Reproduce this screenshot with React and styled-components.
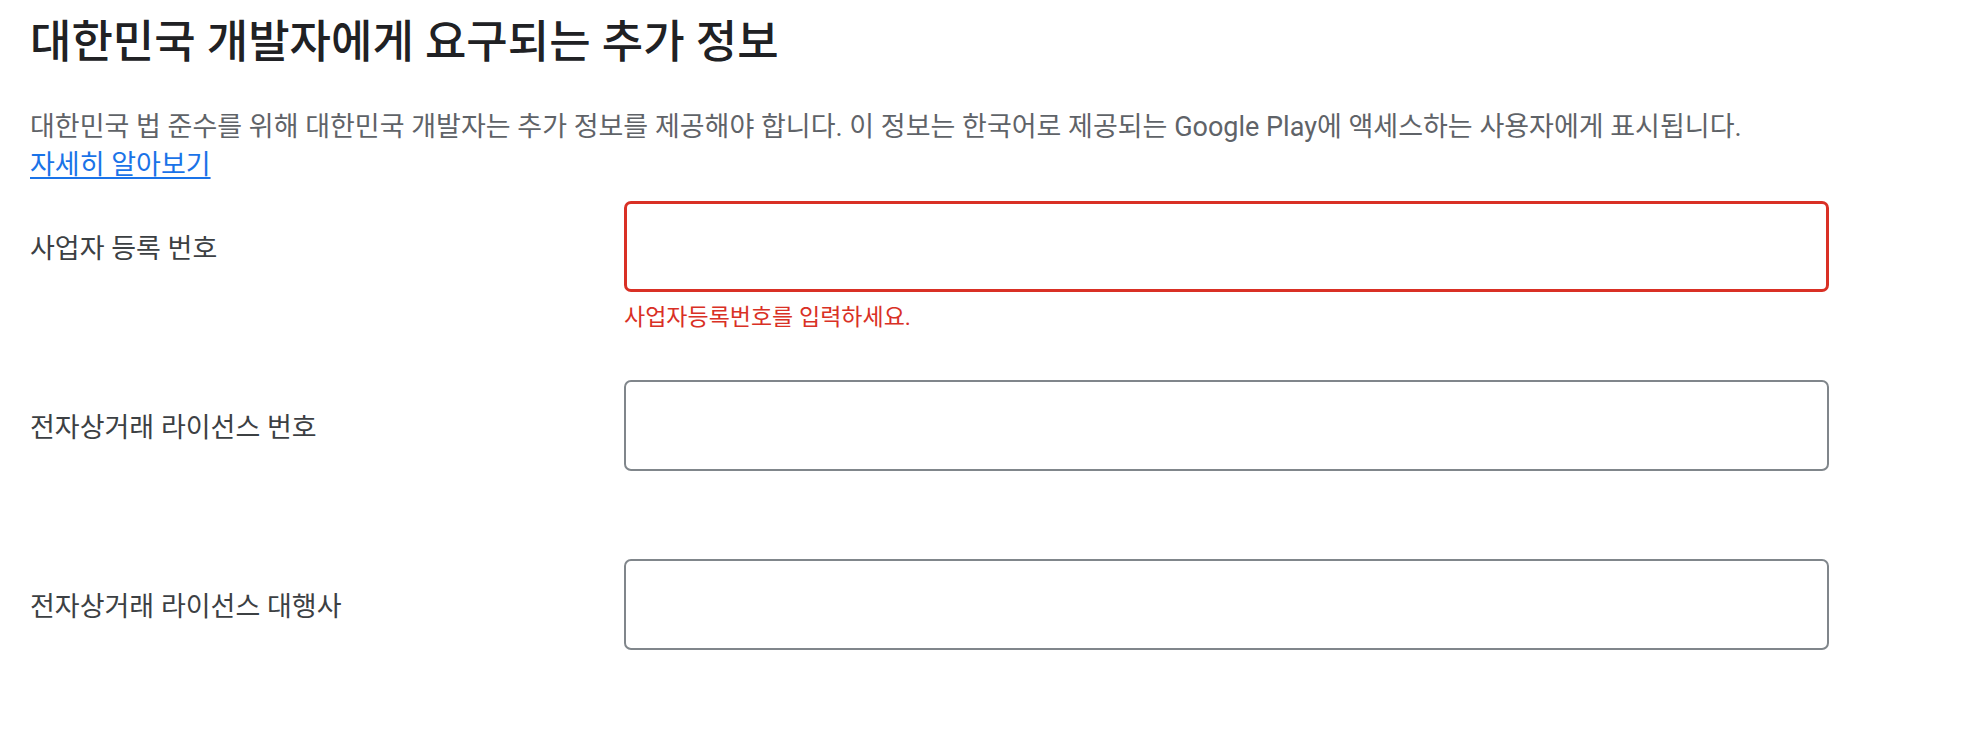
import React from 'react';
import styled, { createGlobalStyle } from 'styled-components';

const GlobalStyle = createGlobalStyle`
	body {
		margin: 0;
		background: #fff;
		font-family: Roboto, "Noto Sans CJK KR", sans-serif;
	}
`;

const Page = styled.div`
	padding: 16px 0 0 30px;
	width: 1799px;
`;

const Title = styled.h1`
	margin: 0;
	font-size: 45px;
	line-height: 54px;
	font-weight: 500;
	color: #202124;
`;

const Intro = styled.p`
	margin: 38px 0 0;
	font-size: 27px;
	line-height: 38px;
	color: #5f6368;
`;

const Link = styled.a`
	display: inline-block;
	color: #1a73e8;
	text-decoration: underline;
	text-underline-offset: 3px;
	cursor: pointer;
`;

const Form = styled.div`
	margin-top: 17px;
	display: flex;
	flex-direction: column;
	gap: 48px;
`;

const Row = styled.div`
	display: flex;
	align-items: flex-start;
`;

const Label = styled.label`
	width: 594px;
	height: 91px;
	display: flex;
	align-items: center;
	font-size: 27px;
	color: #3c4043;
`;

const Field = styled.div`
	width: 1205px;
`;

const Input = styled.input`
	display: block;
	box-sizing: border-box;
	width: 100%;
	height: 91px;
	padding: 0 20px;
	border: ${props => props.$error ? '3px solid #d93025' : '2px solid #80868b'};
	border-radius: 7px;
	background: #fff;
	font-size: 27px;
	font-family: inherit;
	outline: none;
`;

const Helper = styled.div`
	margin-top: 12px;
	min-height: 28px;
	font-size: 23px;
	line-height: 28px;
	color: #d93025;
`;

const fields = [
	{ label: '사업자 등록 번호', error: '사업자등록번호를 입력하세요.' },
	{ label: '전자상거래 라이선스 번호' },
	{ label: '전자상거래 라이선스 대행사' },
];

const App = () => {
	return (
		<Page>
			<GlobalStyle />
			<Title>대한민국 개발자에게 요구되는 추가 정보</Title>
			<Intro>
				대한민국 법 준수를 위해 대한민국 개발자는 추가 정보를 제공해야 합니다. 이 정보는 한국어로 제공되는 Google Play에 액세스하는 사용자에게 표시됩니다.
				<br />
				<Link>자세히 알아보기</Link>
			</Intro>
			<Form>
				{fields.map(f => (
					<Row key={f.label}>
						<Label>{f.label}</Label>
						<Field>
							<Input type="text" $error={!!f.error} />
							<Helper>{f.error}</Helper>
						</Field>
					</Row>
				))}
			</Form>
		</Page>
	);
};

export default App;
